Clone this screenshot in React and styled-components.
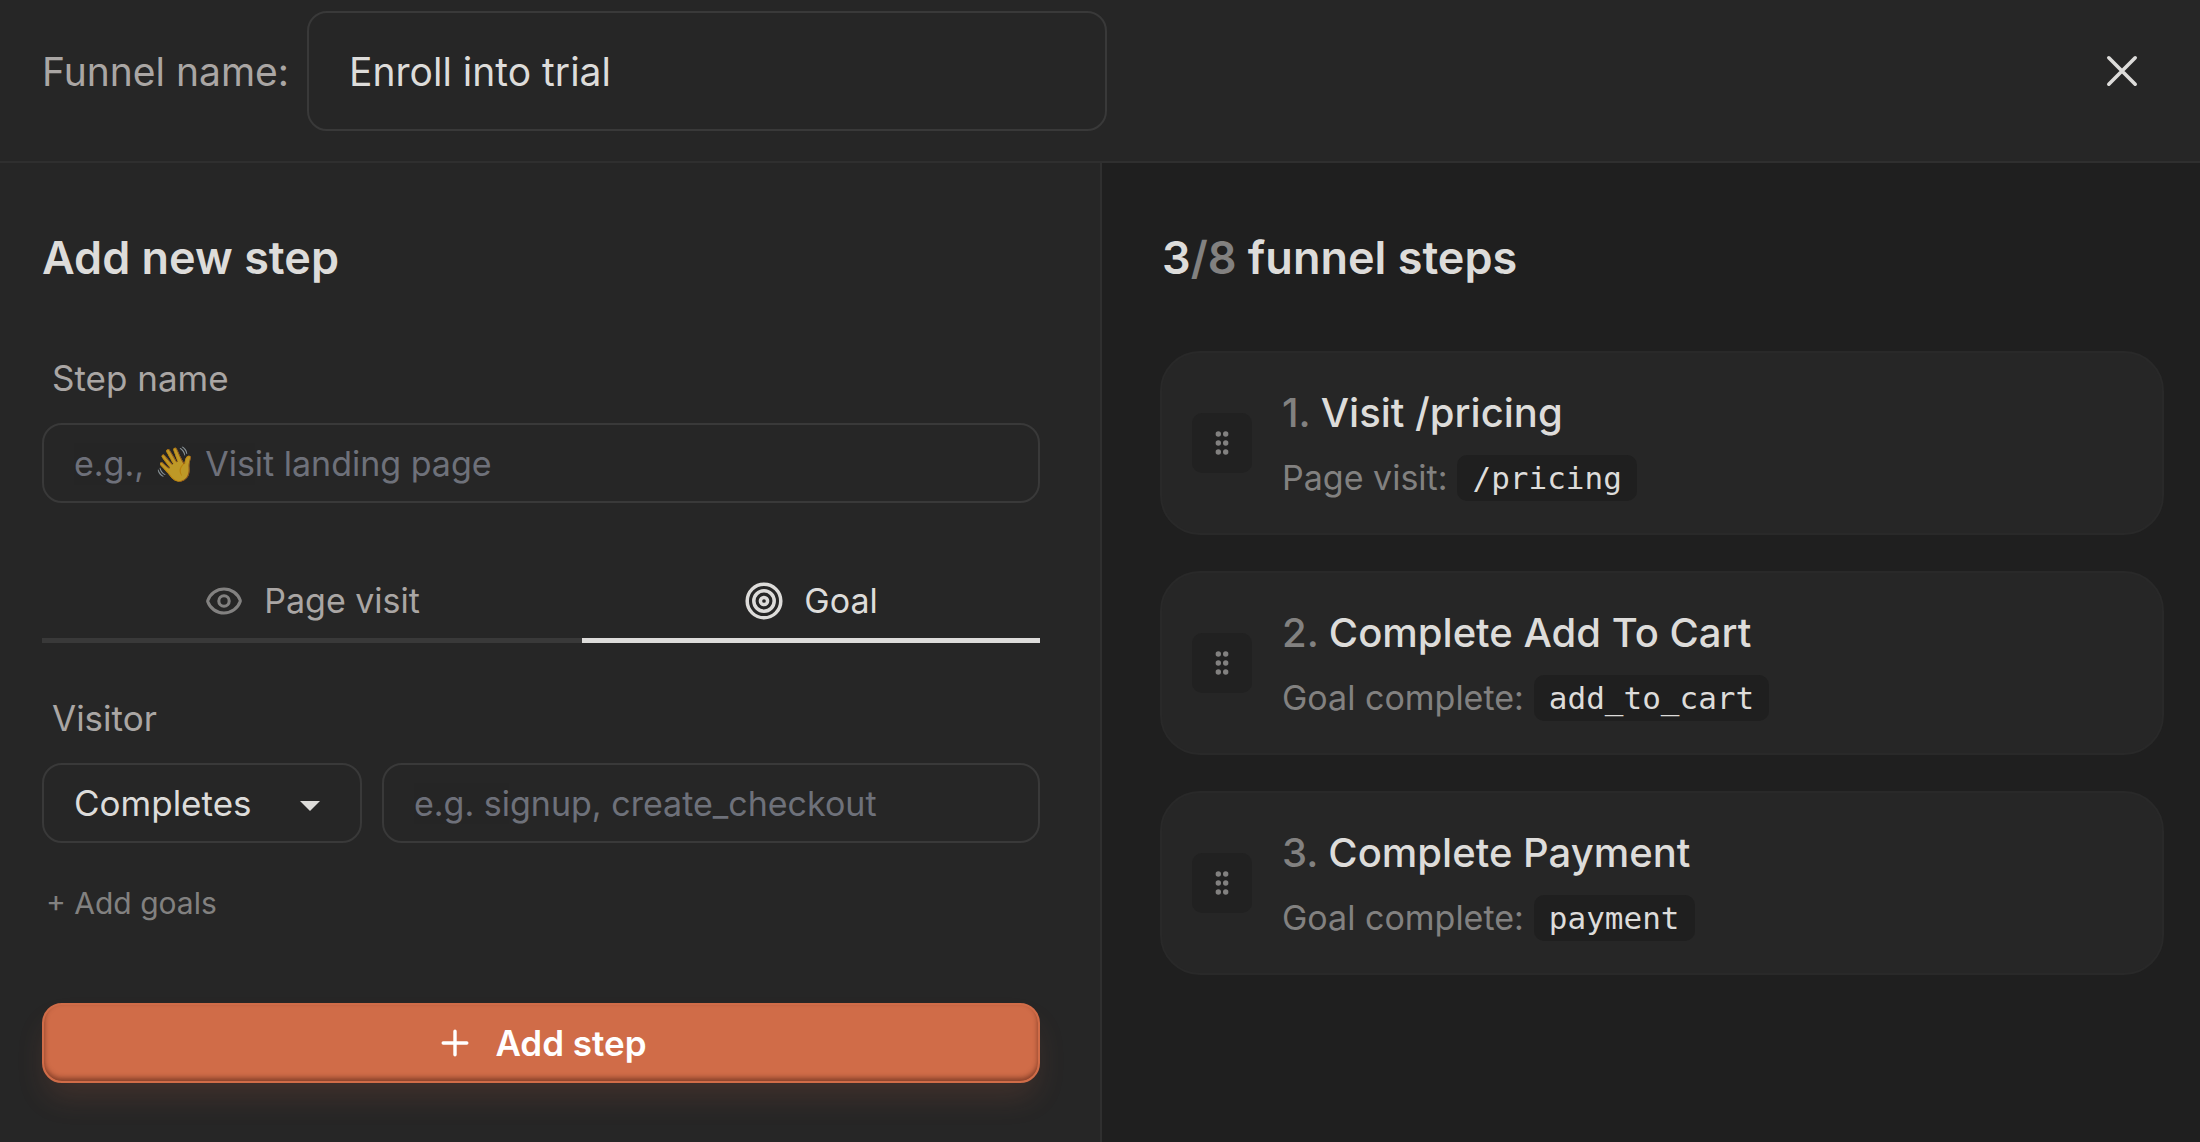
import React, { useState } from 'react';
import styled, { createGlobalStyle } from 'styled-components';

const steps = [
    { title: 'Visit /pricing', kind: 'Page visit:', value: '/pricing' },
    { title: 'Complete Add To Cart', kind: 'Goal complete:', value: 'add_to_cart' },
    { title: 'Complete Payment', kind: 'Goal complete:', value: 'payment' },
];

function CloseIcon() {
    return (
        <svg width="40" height="40" viewBox="0 0 40 40" fill="none" stroke="currentColor" strokeWidth="3.6" strokeLinecap="round">
            <path d="M6.8 6.8l26.4 26.4M33.2 6.8L6.8 33.2" />
        </svg>
    );
}

function PlusIcon() {
    return (
        <svg width="40" height="40" viewBox="0 0 40 40" fill="none" stroke="currentColor" strokeWidth="3.4" strokeLinecap="round">
            <path d="M20 8.2v23.6M8.2 20h23.6" />
        </svg>
    );
}

function EyeIcon() {
    return (
        <svg width="40" height="40" viewBox="0 0 40 40" fill="none" stroke="currentColor" strokeWidth="3.1" strokeLinejoin="round">
            <path d="M3.8 20.7a2 2 0 0 1 0-1.3C6.2 12.6 12.5 8 20 8s13.8 4.6 16.2 11.3a2 2 0 0 1 0 1.3C33.8 27.4 27.5 32 20 32S6.2 27.4 3.8 20.7z" />
            <circle cx="20" cy="20" r="5.2" />
        </svg>
    );
}

function GoalIcon() {
    return (
        <svg width="40" height="40" viewBox="0 0 40 40" fill="none" stroke="currentColor" strokeWidth="3.5">
            <circle cx="20" cy="20" r="16.8" />
            <circle cx="20" cy="20" r="10.2" />
            <circle cx="20" cy="20" r="3.6" />
        </svg>
    );
}

function GripIcon() {
    return (
        <svg width="30" height="30" viewBox="0 0 30 30" fill="currentColor">
            {[6, 15, 24].map((y) => (
                <React.Fragment key={y}>
                    <circle cx="11.3" cy={y} r="2.7" />
                    <circle cx="18.7" cy={y} r="2.7" />
                </React.Fragment>
            ))}
        </svg>
    );
}

function App() {
    const [tab, setTab] = useState('goal');

    return (
        <Page>
            <GlobalStyle />
            <Header>
                <FunnelLabel htmlFor="funnel-name">Funnel name:</FunnelLabel>
                <FunnelInput id="funnel-name" type="text" defaultValue="Enroll into trial" />
                <CloseButton type="button" aria-label="Close">
                    <CloseIcon />
                </CloseButton>
            </Header>
            <Main>
                <FormPanel>
                    <Heading>Add new step</Heading>
                    <Form onSubmit={(e) => e.preventDefault()}>
                        <Label htmlFor="step-name">Step name</Label>
                        <Input id="step-name" type="text" placeholder="e.g., 👋 Visit landing page" />
                        <Tabs role="tablist">
                            <Tab type="button" role="tab" aria-selected={tab === 'visit'} $active={tab === 'visit'} onClick={() => setTab('visit')}>
                                <EyeIcon />
                                Page visit
                            </Tab>
                            <Tab type="button" role="tab" aria-selected={tab === 'goal'} $active={tab === 'goal'} onClick={() => setTab('goal')}>
                                <GoalIcon />
                                Goal
                            </Tab>
                        </Tabs>
                        <Label htmlFor="visitor-action">Visitor</Label>
                        <FieldRow>
                            <SelectWrapper>
                                <Select id="visitor-action" defaultValue="completes">
                                    <option value="completes">Completes</option>
                                    <option value="skips">Skips</option>
                                </Select>
                                <Caret width="20" height="10" viewBox="0 0 20 10" fill="currentColor">
                                    <path d="M0 0h20L10 10z" />
                                </Caret>
                            </SelectWrapper>
                            <Input type="text" aria-label="Goal name" placeholder="e.g. signup, create_checkout" />
                        </FieldRow>
                        <AddGoals type="button">+ Add goals</AddGoals>
                        <AddStep type="submit">
                            <PlusIcon />
                            Add step
                        </AddStep>
                    </Form>
                </FormPanel>
                <StepsPanel>
                    <Heading>
                        3<Muted>/8</Muted> funnel steps
                    </Heading>
                    <StepList>
                        {steps.map((step, i) => (
                            <StepCard key={step.title}>
                                <Handle type="button" aria-label={`Move step ${i + 1}`}>
                                    <GripIcon />
                                </Handle>
                                <StepBody>
                                    <StepTitle>
                                        <Muted>{i + 1}.</Muted>
                                        <span>{step.title}</span>
                                    </StepTitle>
                                    <StepMeta>
                                        <span>{step.kind}</span>
                                        <Code>{step.value}</Code>
                                    </StepMeta>
                                </StepBody>
                            </StepCard>
                        ))}
                    </StepList>
                </StepsPanel>
            </Main>
        </Page>
    );
}

export default App;

const GlobalStyle = createGlobalStyle`
    * {
        box-sizing: border-box;
    }

    body {
        margin: 0;
        background: #262626;
        color: #dddcda;
        font-family: Inter, sans-serif;
    }

    button, input, select {
        margin: 0;
        font-family: inherit;
        color: inherit;
    }

    svg {
        display: block;
        flex: none;
    }
`;

const Page = styled.div`
    min-height: 100vh;
    display: flex;
    flex-direction: column;
`;

const Header = styled.header`
    display: flex;
    align-items: center;
    gap: 18px;
    padding: 11px 58px 30px 42px;
    border-bottom: 2px solid #2f2f2f;
`;

const FunnelLabel = styled.label`
    color: #aaa6a4;
    font-size: 39px;
    white-space: nowrap;
`;

const FunnelInput = styled.input`
    flex: 0 1 800px;
    min-width: 0;
    height: 120px;
    padding: 0 40px;
    border: 2px solid #393939;
    border-radius: 20px;
    background: transparent;
    font-size: 39px;
`;

const CloseButton = styled.button`
    margin-left: auto;
    padding: 0;
    border: 0;
    background: none;
    cursor: pointer;
`;

const Main = styled.main`
    flex: 1;
    display: grid;
    grid-template-columns: 1fr 1fr;
`;

const FormPanel = styled.section`
    padding: 67px 60px 58px 42px;
`;

const StepsPanel = styled.section`
    padding: 67px 36px 58px 60px;
    border-left: 2px solid #2f2f2f;
    background: #1f1f1f;
`;

const Heading = styled.h2`
    margin: 0;
    font-size: 45px;
    line-height: 56px;
    font-weight: 600;
`;

const Muted = styled.span`
    color: #828180;
`;

const Form = styled.form`
    display: flex;
    flex-direction: column;
    padding-top: 67px;
`;

const Label = styled.label`
    padding-left: 10px;
    margin-bottom: 20px;
    color: #aaa6a4;
    font-size: 35px;
    line-height: 50px;
`;

const Input = styled.input`
    width: 100%;
    min-width: 0;
    height: 80px;
    padding: 0 30px;
    border: 2px solid #393939;
    border-radius: 20px;
    background: transparent;
    font-size: 34px;

    &::placeholder {
        color: #8d919e;
        opacity: 0.7;
    }
`;

const Tabs = styled.div`
    display: flex;
    margin: 60px 0 50px;
`;

const Tab = styled.button`
    flex: 1 1 auto;
    display: flex;
    justify-content: center;
    align-items: center;
    gap: 20px;
    height: 80px;
    padding: 0;
    border: 0;
    border-bottom: 5px solid ${(p) => (p.$active ? '#dddcda' : '#393939')};
    background: none;
    color: ${(p) => (p.$active ? '#dddcda' : '#aaa6a4')};
    font-size: 34px;
    cursor: pointer;

    svg {
        color: ${(p) => (p.$active ? '#dddcda' : '#828180')};
    }
`;

const FieldRow = styled.div`
    display: flex;
    gap: 20px;
`;

const SelectWrapper = styled.div`
    position: relative;
    flex: 0 0 320px;
`;

const Select = styled.select`
    appearance: none;
    width: 100%;
    height: 80px;
    padding: 0 70px 0 30px;
    border: 2px solid #393939;
    border-radius: 20px;
    background: transparent;
    font-size: 35px;

    option {
        background: #262626;
    }
`;

const Caret = styled.svg`
    position: absolute;
    top: 38px;
    right: 42px;
    pointer-events: none;
`;

const AddGoals = styled.button`
    align-self: flex-start;
    margin: 38px 0 78px;
    padding: 0 4px;
    border: 0;
    background: none;
    color: #828180;
    font-size: 30px;
    line-height: 44px;
    cursor: pointer;
`;

const AddStep = styled.button`
    display: flex;
    justify-content: center;
    align-items: center;
    gap: 20px;
    height: 80px;
    border: 2px solid #d06c48;
    border-radius: 20px;
    background: #d06c48;
    box-shadow: 0 18px 30px -4px rgba(208, 108, 72, 0.16), inset 0 -3px 5px rgba(60, 20, 10, 0.5);
    color: #fff;
    font-size: 35px;
    font-weight: 600;
    cursor: pointer;
`;

const StepList = styled.ol`
    display: flex;
    flex-direction: column;
    gap: 36px;
    margin: 0 0 0 -2px;
    padding: 65px 0 0;
    list-style: none;
`;

const StepCard = styled.li`
    display: flex;
    align-items: center;
    gap: 30px;
    padding: 32px 30px;
    border: 2px solid #292929;
    border-radius: 40px;
    background: #262626;
`;

const Handle = styled.button`
    display: flex;
    justify-content: center;
    align-items: center;
    width: 60px;
    height: 60px;
    padding: 0;
    border: 0;
    border-radius: 10px;
    background: #212121;
    color: #828180;
    cursor: grab;
`;

const StepBody = styled.div`
    display: flex;
    flex-direction: column;
    gap: 14px;
`;

const StepTitle = styled.h3`
    display: flex;
    gap: 10px;
    margin: 0;
    font-size: 40px;
    line-height: 56px;
    font-weight: 500;
`;

const StepMeta = styled.div`
    display: flex;
    gap: 10px;
    color: #828180;
    font-size: 34px;
    line-height: 46px;
`;

const Code = styled.code`
    padding: 0 15px;
    border-radius: 10px;
    background: #1f1f1f;
    color: #dddcda;
    font-family: 'DejaVu Sans Mono', monospace;
    font-size: 31px;
`;
